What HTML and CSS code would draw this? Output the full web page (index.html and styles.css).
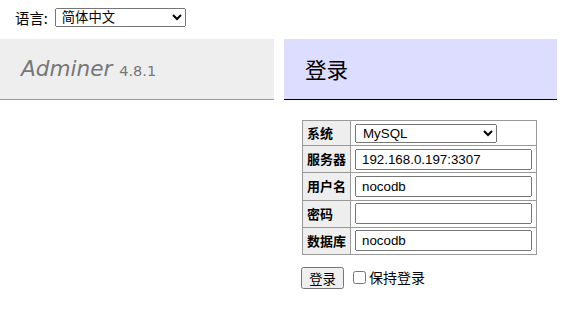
FILE: index.html
```html
<!DOCTYPE html>
<html lang="zh-cn">
<head>
  <meta charset="UTF-8">
  <title>登录 - Adminer</title>
  <link rel="stylesheet" href="styles.css">
</head>
<body>
<form class="lang" action="">
  <span>语言:</span>
  <select name="lang">
    <option>简体中文</option>
    <option>English</option>
    <option>繁體中文</option>
  </select>
</form>

<div class="main">
  <div class="menu">
    <h1><a href="#" class="h1">Adminer</a> <span class="version">4.8.1</span></h1>
  </div>

  <div class="content">
    <h2>登录</h2>
    <form action="" method="post">
      <table class="login">
        <tr>
          <th>系统</th>
          <td>
            <select name="driver" class="sel-driver">
              <option>MySQL</option>
              <option>SQLite 3</option>
              <option>PostgreSQL</option>
            </select>
          </td>
        </tr>
        <tr><th>服务器</th><td><input type="text" name="server" value="192.168.0.197:3307"></td></tr>
        <tr><th>用户名</th><td><input type="text" name="username" value="nocodb"></td></tr>
        <tr><th>密码</th><td><input type="password" name="password"></td></tr>
        <tr><th>数据库</th><td><input type="text" name="db" value="nocodb"></td></tr>
      </table>
      <p class="actions">
        <input type="submit" value="登录">
        <label class="keep"><input type="checkbox" name="permanent">保持登录</label>
      </p>
    </form>
  </div>
</div>
</body>
</html>
```

FILE: styles.css
```css
* { box-sizing: border-box; }
body {
  margin: 0;
  color: #000;
  background: #fff;
  font: 14.4px/1.25 "DejaVu Sans", "Noto Sans CJK SC", sans-serif;
}
input, select, button {
  font-family: "Liberation Sans", "Noto Sans CJK SC", sans-serif;
  font-size: 13.33px;
}
.lang {
  height: 39px;
  padding: 8px 15px 0;
  margin: 0;
  display: flex;
  align-items: flex-start;
  gap: 7px;
  font-family: "Noto Sans CJK SC", sans-serif;
  font-size: 14.4px;
  line-height: 19px;
}
.lang select {
  width: 131px;
  height: 19px;
  padding: 0 2px;
}
.main {
  display: flex;
  align-items: flex-start;
}
.menu { width: 274px; }
h1 {
  margin: 0;
  padding: 16px 21px 17px;
  height: 61px;
  font-size: 21.6px;
  line-height: 27px;
  font-weight: normal;
  color: #777;
  background: #eee;
  border-bottom: 1px solid #999;
}
.h1 {
  color: #777;
  text-decoration: none;
  font-style: italic;
}
.version {
  font-size: 14.5px;
  line-height: 1;
  color: #777;
}
.content {
  width: 273px;
  margin-left: 10px;
}
h2 {
  margin: 0 0 20px;
  padding: 16px 21px 17px;
  height: 61px;
  font: normal 21.6px/27px "Noto Sans CJK SC", sans-serif;
  background: #ddf;
  border-bottom: 1px solid #000;
}
.login {
  margin: 0 0 0 18px;
  border-collapse: collapse;
  font-size: 12.96px;
}
.login th, .login td {
  border: 1px solid #999;
  padding: 2.6px 4px;
}
.login th {
  background: #eee;
  text-align: left;
  font-family: "Noto Sans CJK SC", sans-serif;
  font-weight: bold;
  width: 48px;
}
.login input {
  width: 177px;
  height: 21px;
  padding: 1px 5px;
  display: block;
}
.login .sel-driver {
  width: 142px;
  height: 19px;
  padding: 0 3px;
  display: block;
}
.actions {
  margin: 12px 0 0 17px;
  display: flex;
  align-items: center;
  gap: 9px;
}
.actions input[type=submit] {
  height: 22px;
  width: 43px;
  padding: 0;
  font-family: "Noto Sans CJK SC", sans-serif;
}
.keep {
  display: flex;
  align-items: center;
  font-family: "Noto Sans CJK SC", sans-serif;
  font-size: 14px;
}
.keep input { margin: 0 3px 0 0; width: 13px; height: 13px; }
```
